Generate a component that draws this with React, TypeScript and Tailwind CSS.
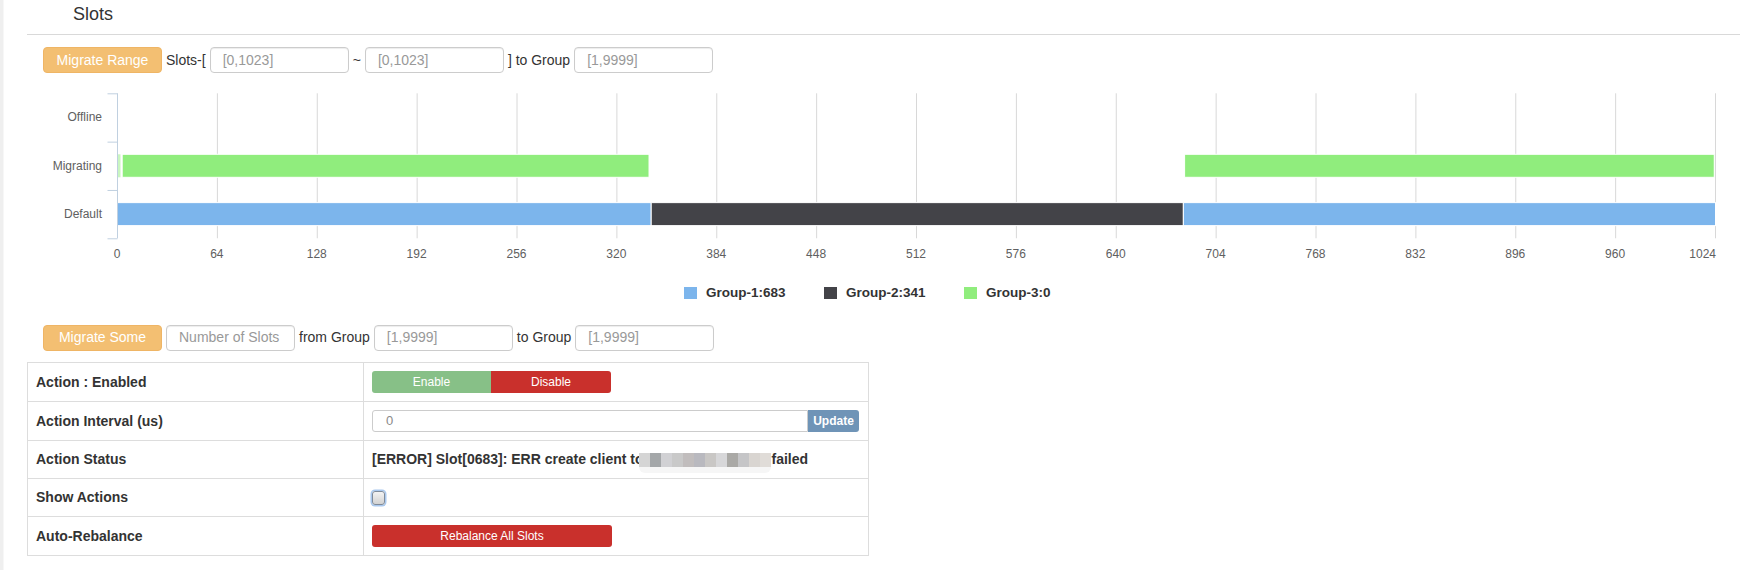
import React from 'react';

// slot range shown on the chart
const MAX_SLOT = 1024;
const PLOT_LEFT = 90;
const PLOT_WIDTH = 1598;
const PLOT_TOP = 8.3;
const ROW_H = 48.33;
const sx = (slot: number) => PLOT_LEFT + (slot * PLOT_WIDTH) / MAX_SLOT;

const categories = ['Offline', 'Migrating', 'Default'];
const ticks = Array.from({ length: 17 }, (_, i) => i * 64);

const bars = [
  { row: 1, from: 3, to: 340.6, color: '#90ed7d' },
  { row: 1, from: 683.8, to: 1023.2, color: '#90ed7d' },
  { row: 2, from: 0, to: 342, color: '#7cb5ec' },
  { row: 2, from: 342, to: 683, color: '#434348' },
  { row: 2, from: 683, to: 1024, color: '#7cb5ec' },
];

const legend = [
  { name: 'Group-1:683', color: 'bg-[#7cb5ec]' },
  { name: 'Group-2:341', color: 'bg-[#434348]' },
  { name: 'Group-3:0', color: 'bg-[#90ed7d]' },
];

// masked address in the status line
const mask = ['#d5d5d5', '#a4a7a9', '#d1d1d4', '#c9c9c9', '#c1bdbd', '#b9b9bf', '#c9c7c5', '#d7d7d9', '#aaa9a6', '#c5c5c7', '#d9d5d1', '#e0dcd8'];

function Field({ placeholder, w }: { placeholder: string; w: string }) {
  return (
    <div className={`${w} h-[26px] flex items-center pl-[12px] border border-[#ccc] rounded-[4px] bg-white text-[#999] shadow-[inset_0_1px_1px_rgba(0,0,0,0.075)]`}>
      {placeholder}
    </div>
  );
}

function OrangeButton({ label }: { label: string }) {
  return (
    <div className="w-[119px] h-[26px] flex items-center justify-center rounded-[4px] bg-[#f3bf72] border border-[#efb565] text-white">
      {label}
    </div>
  );
}

function SlotChart() {
  const bottom = PLOT_TOP + ROW_H * 3;
  return (
    <svg width="1713" height="195" className="block" fontFamily="'Liberation Sans', Arial, sans-serif">
      {ticks.slice(1).map((t) => (
        <line key={t} x1={sx(t) + 0.5} x2={sx(t) + 0.5} y1={PLOT_TOP} y2={bottom} stroke="#d8d8d8" strokeWidth="1" />
      ))}
      {bars.map((b, i) => {
        const y = PLOT_TOP + ROW_H * b.row + (ROW_H - 23) / 2;
        return <rect key={i} x={sx(b.from) + 0.5} y={y} width={sx(b.to) - sx(b.from)} height="23" fill={b.color} stroke="#fff" strokeWidth="1" />;
      })}
      <rect x="91" y={PLOT_TOP + ROW_H + (ROW_H - 23) / 2} width="2.5" height="23" fill="#c9f6c0" />
      <line x1="90.5" x2="90.5" y1={PLOT_TOP} y2={bottom} stroke="#c0d0e0" strokeWidth="1" />
      {[0, 1, 2, 3].map((i) => (
        <line key={i} x1="80.5" x2="90.5" y1={PLOT_TOP + ROW_H * i + 0.5} y2={PLOT_TOP + ROW_H * i + 0.5} stroke="#c0d0e0" strokeWidth="1" />
      ))}
      {categories.map((c, i) => (
        <text key={c} x="75" y={PLOT_TOP + ROW_H * i + ROW_H / 2 + 4} textAnchor="end" fontSize="12" fill="#606060">
          {c}
        </text>
      ))}
      {ticks.map((t) => {
        // the last label is pulled inside the plot edge
        const last = t === MAX_SLOT;
        return (
          <text key={t} x={last ? sx(t) + 1 : sx(t)} y="172.5" textAnchor={last ? 'end' : 'middle'} fontSize="12" fill="#606060">
            {t}
          </text>
        );
      })}
    </svg>
  );
}

export default function App() {
  return (
    <div className="flex min-h-[570px] bg-white font-['Liberation_Sans',Arial,sans-serif] text-[14px] text-[#333]">
      <div className="w-[4px] shrink-0 bg-[#efefef] border-r border-[#f7f7f7]" />
      <div className="flex-1 pl-[23px] pr-[13px]">
        <div className="h-[34px] pt-[4px] pl-[46px] text-[18px] leading-[20px]">Slots</div>
        <div className="border-t border-[#d9d9d9]" />

        {/* range migration */}
        <div className="mt-[12px] h-[26px] pl-[16px] flex items-center gap-1">
          <OrangeButton label="Migrate Range" />
          <span>Slots-[</span>
          <Field placeholder="[0,1023]" w="w-[139px]" />
          <span>~</span>
          <Field placeholder="[0,1023]" w="w-[139px]" />
          <span>] to Group</span>
          <Field placeholder="[1,9999]" w="w-[139px]" />
        </div>

        <div className="mt-[12px]">
          <SlotChart />
        </div>

        <div className="h-[26px] pl-[657px] flex items-center">
          {legend.map((l) => (
            <div key={l.name} className="w-[140px] flex items-center gap-[9px]">
              <span className={`w-[13px] h-[12px] ${l.color}`} />
              <span className="text-[13.5px] font-bold text-[#333]">{l.name}</span>
            </div>
          ))}
        </div>

        {/* count migration */}
        <div className="mt-[18px] h-[27px] pl-[16px] flex items-center gap-1">
          <OrangeButton label="Migrate Some" />
          <Field placeholder="Number of Slots" w="w-[129px]" />
          <span>from Group</span>
          <Field placeholder="[1,9999]" w="w-[139px]" />
          <span>to Group</span>
          <Field placeholder="[1,9999]" w="w-[139px]" />
        </div>

        <div className="mt-[11px] w-[842px] border border-[#ddd]">
          <div className="grid grid-cols-[336px_1fr] h-[38px]">
            <div className="border-r border-[#ddd] pl-[8px] flex items-center font-bold">Action : Enabled</div>
            <div className="pl-[8px] flex items-center">
              <div className="w-[119px] h-[22px] flex items-center justify-center rounded-l-[3px] bg-[#87c087] text-white text-[12px]">Enable</div>
              <div className="w-[120px] h-[22px] flex items-center justify-center rounded-r-[3px] bg-[#c9302c] text-white text-[12px]">Disable</div>
            </div>
          </div>
          <div className="grid grid-cols-[336px_1fr] h-[39px] border-t border-[#ddd]">
            <div className="border-r border-[#ddd] pl-[8px] flex items-center font-bold">Action Interval (us)</div>
            <div className="pl-[8px] pr-[9px] flex items-center">
              <div className="flex-1 h-[22px] flex items-center pl-[13px] border border-[#ccc] rounded-l-[3px] text-[13px] text-[#8a8a8a]">0</div>
              <div className="w-[51px] h-[22px] flex items-center justify-center rounded-r-[3px] bg-[#6f94b7] text-white text-[12px] font-bold">Update</div>
            </div>
          </div>
          <div className="grid grid-cols-[336px_1fr] h-[38px] border-t border-[#ddd]">
            <div className="border-r border-[#ddd] pl-[8px] flex items-center font-bold">Action Status</div>
            <div className="pl-[8px] flex items-center font-bold whitespace-nowrap">
              <span>[ERROR] Slot[0683]: ERR create client to</span>
              <span className="ml-[-5px] h-[20px] mt-[6px] flex items-start bg-[#f6f6f6] rounded-b-[6px]">
                {mask.map((c, i) => (
                  <span key={i} className="w-[11px] h-[14px]" style={{ backgroundColor: c }} />
                ))}
              </span>
              <span className="ml-[1px]">failed</span>
            </div>
          </div>
          <div className="grid grid-cols-[336px_1fr] h-[38px] border-t border-[#ddd]">
            <div className="border-r border-[#ddd] pl-[8px] flex items-center font-bold">Show Actions</div>
            <div className="pl-[8px] flex items-center">
              <span className="w-[13px] h-[14px] rounded-[3px] border border-[#7f8b9a] bg-gradient-to-b from-[#f3f3f3] to-[#d2d2d2] shadow-[0_0_0_1.5px_#a9c8ee]" />
            </div>
          </div>
          <div className="grid grid-cols-[336px_1fr] h-[39px] border-t border-[#ddd]">
            <div className="border-r border-[#ddd] pl-[8px] flex items-center font-bold">Auto-Rebalance</div>
            <div className="pl-[8px] flex items-center">
              <div className="w-[240px] h-[22px] flex items-center justify-center rounded-[3px] bg-[#c9302c] text-white text-[12px]">Rebalance All Slots</div>
            </div>
          </div>
        </div>
      </div>
    </div>
  );
}
